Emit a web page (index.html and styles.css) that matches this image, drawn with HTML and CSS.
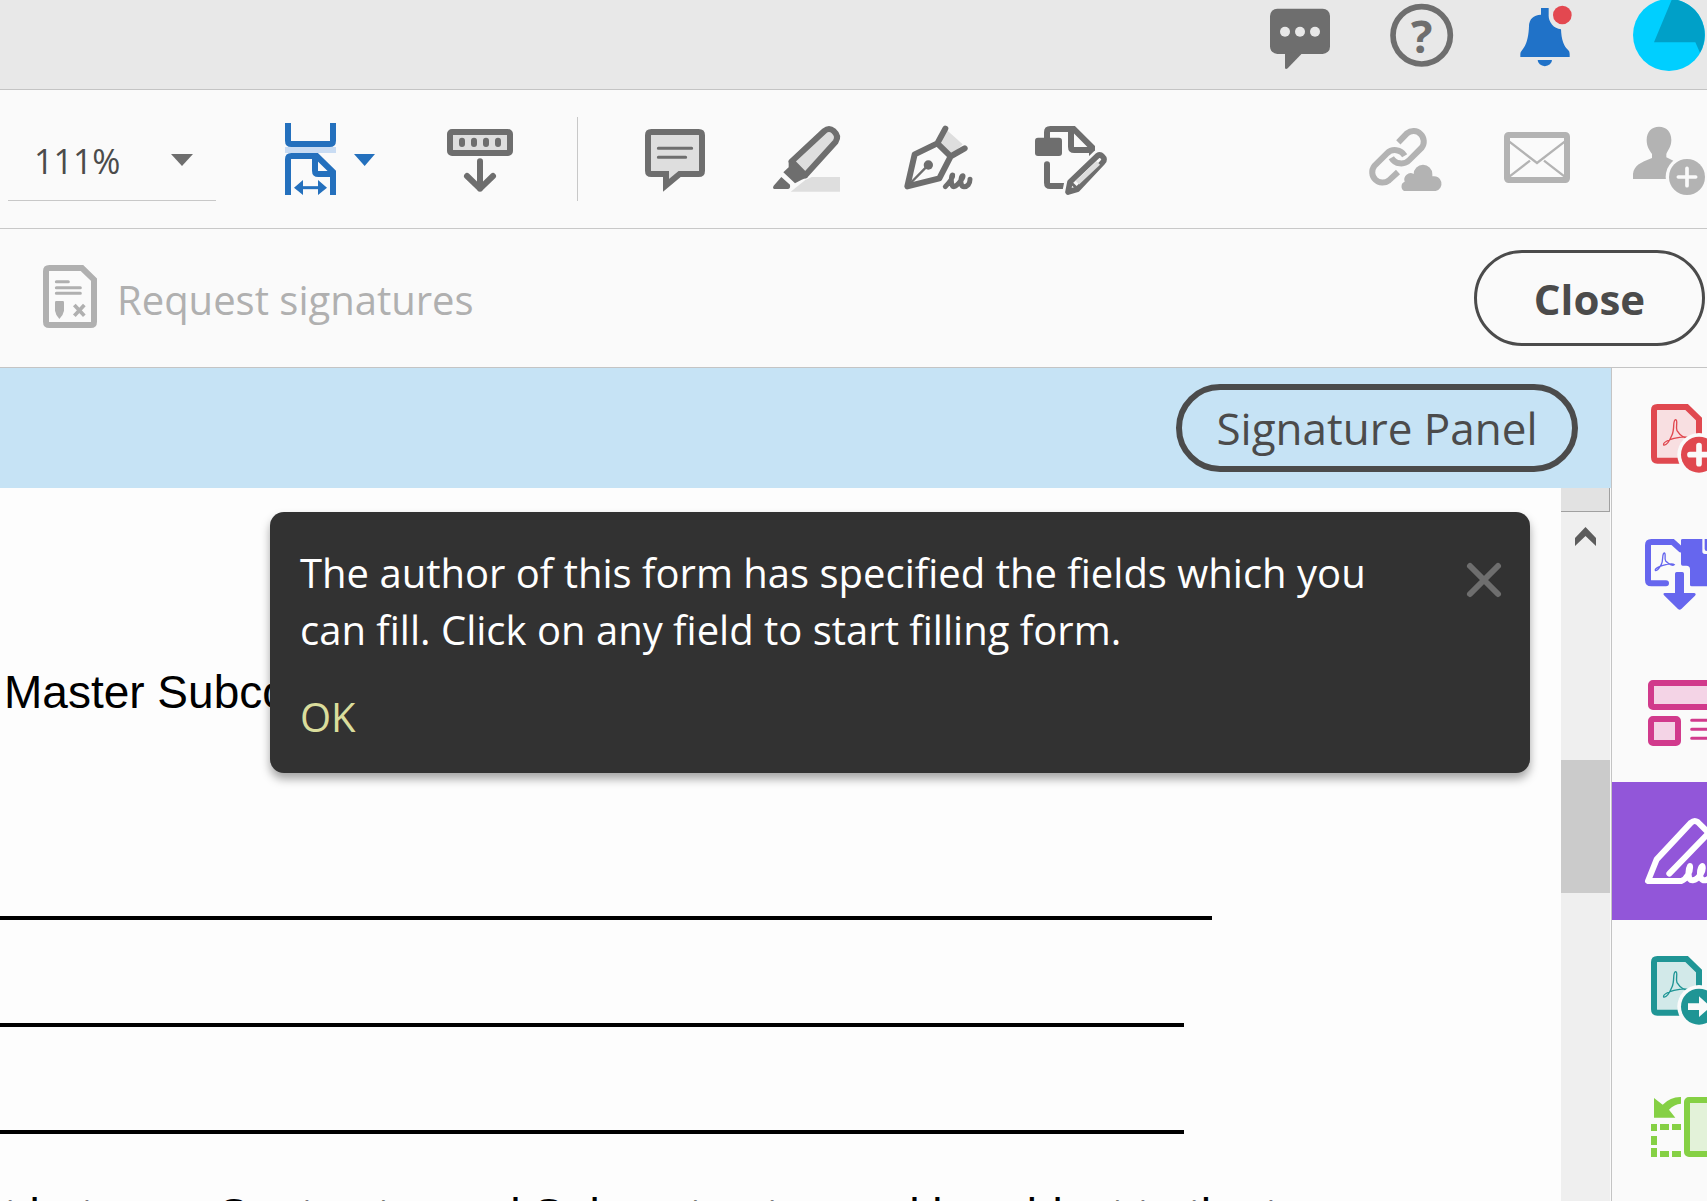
FILE: index.html
```html
<!DOCTYPE html>
<html lang="en">
<head>
<meta charset="utf-8">
<title>Fill &amp; Sign</title>
<link rel="stylesheet" href="styles.css">
</head>
<body>
<header class="app-header">
  <button class="icon-button gray" aria-label="Messages">
    <svg width="60" height="72" viewBox="87 0 180 216"><rect x="90" y="26" width="180" height="136" rx="22" fill="currentColor"/><path d="M135 155V204Q137 210 143 205L188 158Z" fill="currentColor"/><g fill="#e8e8e8"><circle cx="135" cy="95" r="15"/><circle cx="180" cy="95" r="15"/><circle cx="225" cy="95" r="15"/></g></svg>
  </button>
  <button class="icon-button gray" aria-label="Help">
    <svg width="64" height="72" viewBox="447 0 192 216"><circle cx="545" cy="106" r="86" fill="none" stroke="currentColor" stroke-width="17"/><text class="help-mark" x="545" y="158" text-anchor="middle" fill="currentColor">?</text></svg>
  </button>
  <button class="icon-button" aria-label="Notifications">
    <svg width="60" height="72" viewBox="819 0 180 216"><g fill="#2072c8"><path d="M903 24H926V44A42 42 0 0 0 963 88C964 118 971 139 985 151Q989 155 989 162V171H841V162Q841 156 845 152C860 136 866 110 867 78Q868 46 903 44Z"/><path d="M893 180H936A21 18 0 0 1 893 180Z"/></g><circle cx="967" cy="45" r="28" fill="#e34850"/></svg>
  </button>
  <button class="icon-button" aria-label="Account">
    <svg width="72" height="72" viewBox="1179 0 216 216"><circle cx="1287" cy="105" r="108" fill="#00cfff"/><path d="M1296 -3L1242 127H1366L1380 158A108 108 0 0 0 1296 -3Z" fill="#00a0c8"/></svg>
  </button>
</header>

<div class="toolbar">
  <select class="zoom-select" aria-label="Zoom level"><option>111%</option></select>
  <button class="icon-button blue" aria-label="Fit width">
    <svg width="108" height="78" viewBox="828 90 324 234"><g fill="none" stroke="currentColor" stroke-width="18"><path d="M864 99V152Q864 162 874 162H989Q999 162 999 152V99"/><path d="M864 315V208Q864 198 874 198H950L999 246V315"/><path d="M945 198V242Q945 252 955 252H999"/><path d="M905 293H960" stroke-width="9"/></g><rect x="855" y="171" width="153" height="18" fill="#c9dcf3"/><path d="M882 293L909 270V315ZM981 293L954 270V315ZM1062 192H1125L1094 228Z" fill="currentColor"/></svg>
  </button>
  <button class="icon-button gray" aria-label="Show keyboard toolbar">
    <svg width="72" height="78" viewBox="132 90 216 234"><g fill="none" stroke="currentColor" stroke-width="18" stroke-linecap="round" stroke-linejoin="round"><rect x="150" y="126" width="180" height="63" rx="6" fill="#dedede"/><path d="M186 152V162M222 152V162M258 152V162M294 152V162M240 214V296M201 258L240 296L279 258"/></g></svg>
  </button>
  <span class="divider"></span>
  <button class="icon-button gray" aria-label="Comment">
    <svg width="72" height="78" viewBox="717 90 216 234"><g fill="none" stroke="currentColor" stroke-width="18"><path d="M744 136Q744 126 754 126H896Q906 126 906 136V242Q906 252 896 252H839L798 286V252H754Q744 252 744 242Z" fill="#dedede"/><path d="M775 175H875M775 202H857" stroke-width="9" stroke-linecap="round"/></g></svg>
  </button>
  <button class="icon-button gray" aria-label="Highlight">
    <svg width="72" height="78" viewBox="93 90 216 234"><path d="M152 305L196 270L215 261H300V305Z" fill="#dedede"/><path d="M155 214L253 123Q267 111 281 123Q298 138 287 155L196 256Z" fill="#dedede" stroke="currentColor" stroke-width="18" stroke-linejoin="round"/><path d="M146 212L162 220L193 250L203 262L185 269L165 280L130 247L146 232ZM124 261L150 284Q152 297 143 297H107Q95 297 101 287Z" fill="currentColor"/></svg>
  </button>
  <button class="icon-button gray" aria-label="Sign">
    <svg width="72" height="78" viewBox="489 90 216 234"><path d="M592 160L616 116L668 163L632 199Z" fill="#dedede"/><g fill="none" stroke="currentColor" stroke-width="18" stroke-linecap="round" stroke-linejoin="round"><path d="M502 289L524 193L592 160L632 199L598 265ZM592 160L616 116M632 199L674 175"/><path d="M560 230L506 285" stroke-width="7"/><path d="M616 290C630 275 640 262 638 255C634 252 630 290 642 290C652 288 672 262 669 257C662 256 658 290 672 290C682 290 690 282 690 268" stroke-width="15"/></g><circle cx="565" cy="225" r="14" fill="currentColor"/></svg>
  </button>
  <button class="icon-button gray" aria-label="Edit document">
    <svg width="72" height="78" viewBox="885 90 216 234"><rect x="885" y="143" width="81" height="55" rx="9" fill="currentColor"/><g fill="none" stroke="currentColor" stroke-width="18"><path d="M921 150V127Q921 117 931 117H1001L1056 172V200M993 117V170Q993 180 1003 180H1056"/><path d="M921 223V278Q921 288 931 288H976" stroke-linecap="round"/></g><path d="M984 306L990 276L1073 197Q1080 192 1087 199Q1097 208 1088 217L1012 298Z" fill="#fafafa" stroke="#fafafa" stroke-width="34"/><path d="M984 306L990 276L1073 197Q1080 192 1087 199Q1097 208 1088 217L1012 298Z" fill="#fafafa" stroke="currentColor" stroke-width="17" stroke-linejoin="round"/><path d="M1012 278L1075 219" stroke="#dedede" stroke-width="15"/><path d="M994 279L1014 298" stroke="currentColor" stroke-width="9"/></svg>
  </button>
  <div class="share-tools">
    <button class="icon-button light" aria-label="Share link">
      <svg width="72" height="78" viewBox="390 360 216 234"><g fill="none" stroke="currentColor" stroke-width="18"><path d="M478 427L504 400A31 31 0 0 1 548 443L511 480A34 34 0 0 1 457 473"/><path d="M497 467A34 34 0 0 0 444 460L406 498A31 31 0 0 0 450 541L477 516"/></g><path d="M495 573A13 15 0 0 1 497 545A19 19 0 0 1 524 522A28 28 0 0 1 580 522V529A21 21 0 0 1 590 573Z" fill="currentColor"/></svg>
    </button>
    <button class="icon-button light" aria-label="Email">
      <svg width="72" height="78" viewBox="783 360 216 234"><g fill="none" stroke="currentColor"><rect x="801" y="405" width="180" height="135" rx="5" stroke-width="18"/><path d="M808 425L891 489L974 425M808 530L870 482M974 530L912 482" stroke-width="7"/></g></svg>
    </button>
    <button class="icon-button light" aria-label="Add people">
      <svg width="72" height="78" viewBox="1179 360 216 234"><path d="M1220 420C1220 395 1235 380 1257 380S1294 395 1294 420C1294 440 1284 450 1279 462V472L1300 482L1290 537H1179V522C1182 497 1200 488 1236 474V462C1228 450 1220 440 1220 420Z" fill="currentColor"/><circle cx="1341" cy="531" r="64" fill="#fafafa"/><circle cx="1341" cy="531" r="54" fill="currentColor"/><path d="M1315 531H1367M1341 505V557" stroke="#fafafa" stroke-width="11" stroke-linecap="round"/></svg>
    </button>
  </div>
</div>

<div class="sign-bar">
  <button class="request" disabled>
    <svg width="54" height="66" viewBox="129 525 162 198"><g fill="none" stroke="currentColor"><path d="M138 544Q138 534 148 534H246L282 569V695Q282 705 272 705H148Q138 705 138 695Z" stroke-width="18"/><path d="M169 575H205M169 593H241M169 610H241" stroke-width="9" stroke-linecap="round"/><path d="M223 645L253 677M253 645L223 677" stroke-width="11"/></g><path d="M165 637Q165 633 169 633H188Q192 633 192 637V662Q190 675 178 687Q167 675 165 662Z" fill="currentColor"/></svg>
    <span class="request-label">Request signatures</span>
  </button>
  <button class="close-button">Close</button>
</div>

<div class="workspace">
  <main class="viewer">
    <div class="signature-bar">
      <button class="panel-button">Signature Panel</button>
    </div>
    <div class="viewport">
      <article class="document">
        <p class="text-line first">Master Subcontract Agreement</p>
        <hr class="rule wide">
        <hr class="rule">
        <hr class="rule">
        <p class="text-line">t between Contractor and Subcontractor, and is subject to the t</p>
        <section class="notice" role="dialog" aria-label="Form filling">
          <div class="notice-body">
            <p class="notice-text">The author of this form has specified the fields which you can fill. Click on any field to start filling form.</p>
            <button class="ok-button">OK</button>
          </div>
          <button class="dismiss" aria-label="Dismiss">
            <svg width="34" height="34" viewBox="0 0 34 34"><path d="M3 3L31 31M31 3L3 31" stroke="currentColor" stroke-width="6" stroke-linecap="round"/></svg>
          </button>
        </section>
      </article>
      <div class="scrollbar">
        <div class="splitter"></div>
        <button class="scroll-up" aria-label="Scroll up"><svg width="21" height="19" viewBox="0 0 21 19"><path d="M0 11L10.500 0L21 11V19L10.500 9L0 19Z" fill="#5c5c5c"/></svg></button>
        <div class="thumb"></div>
      </div>
    </div>
  </main>

  <nav class="tools" aria-label="Tools">
    <button class="tool red" aria-label="Create PDF">
      <svg width="95" height="138" viewBox="216 -36 285 414"><path d="M342 91Q342 81 352 81H440L477 117V232Q477 242 467 242H352Q342 242 342 232Z" fill="#f8dfe1" stroke="currentColor" stroke-width="18"/><path d="M407 119C397 121 405 146 396 165C388 184 378 197 371 195C368 188 386 179 402 175C418 171 438 169 444 173C438 178 421 168 411 152C406 140 415 121 407 119Z" fill="none" stroke="currentColor" stroke-width="4"/><circle cx="477" cy="224" r="65" fill="#fafafa"/><circle cx="477" cy="224" r="54" fill="currentColor"/><path d="M450 224H504M477 197V251" stroke="#fafafa" stroke-width="17" stroke-linecap="round"/></svg>
    </button>
    <button class="tool indigo" aria-label="Export PDF">
      <svg width="95" height="138" viewBox="216 378 285 414"><path d="M378 610H334Q324 610 324 600V496Q324 486 334 486H398L422 508" fill="none" stroke="currentColor" stroke-width="18" stroke-linecap="round"/><path d="M373 519C365 521 371 540 364 553C358 564 350 573 346 571C344 566 357 559 369 556C381 553 398 550 403 554C399 559 386 552 377 543C372 535 379 521 373 519Z" fill="none" stroke="currentColor" stroke-width="4"/><path d="M423 481Q423 477 428 477H487V514Q487 522 495 522H510V619H455Q450 619 450 614V568Q450 557 439 557H428Q423 557 423 552Z" fill="currentColor"/><path d="M494 477H510V513H500Q494 513 494 506Z" fill="currentColor"/><path d="M405 581Q405 576 410 576H427Q432 576 432 581V639H463Q470 641 465 647L424 687Q419 692 414 687L372 646Q368 640 374 639H405Z" fill="currentColor"/></svg>
    </button>
    <button class="tool pink" aria-label="Organize pages">
      <svg width="95" height="138" viewBox="216 792 285 414"><g fill="#f4d4e6" stroke="currentColor" stroke-width="18"><rect x="333" y="909" width="200" height="72" rx="6"/><rect x="333" y="1017" width="81" height="72" rx="6"/><path d="M455 1021H520M455 1048H520M455 1075H520" stroke-width="9" stroke-linecap="round"/></g></svg>
    </button>
    <button class="tool selected" aria-label="Fill and sign" aria-current="true">
      <svg width="95" height="138" viewBox="216 66 285 414"><g fill="none" stroke="currentColor" stroke-width="18" stroke-linecap="round" stroke-linejoin="round"><path d="M510 223L473 186Q463 179 453 188L350 298L324 363H424C440 357 452 335 450 318C444 328 442 362 458 361C478 358 492 330 487 318C478 325 475 362 494 361C505 360 512 350 515 340" /><path d="M388 341L500 225"/></g></svg>
    </button>
    <button class="tool teal" aria-label="Send PDF">
      <svg width="95" height="138" viewBox="216 -36 285 414"><path d="M342 91Q342 81 352 81H440L477 117V232Q477 242 467 242H352Q342 242 342 232Z" fill="#d2e9e9" stroke="currentColor" stroke-width="18"/><path d="M407 119C397 121 405 146 396 165C388 184 378 197 371 195C368 188 386 179 402 175C418 171 438 169 444 173C438 178 421 168 411 152C406 140 415 121 407 119Z" fill="none" stroke="currentColor" stroke-width="4"/><circle cx="477" cy="224" r="65" fill="#fafafa"/><circle cx="477" cy="224" r="54" fill="currentColor"/><path d="M444 214H477V193L512 224L477 255V234H444Z" fill="#fafafa"/></svg>
    </button>
    <button class="tool green" aria-label="Crop pages">
      <svg width="95" height="138" viewBox="216 894 285 414"><path d="M342 1014L368 1034Q392 1010 423 1011V1031Q403 1032 387 1049L406 1073H342Z" fill="currentColor"/><path d="M333 1092H351V1113H333ZM333 1128H351V1155H333ZM333 1164H351V1191H333ZM360 1092H387V1110H360ZM396 1092H423V1110H396ZM360 1173H387V1191H360ZM396 1173H423V1191H396Z" fill="currentColor"/><rect x="441" y="1020" width="100" height="162" rx="6" fill="#e3f2d9" stroke="currentColor" stroke-width="18"/></svg>
    </button>
  </nav>
</div>
</body>
</html>
```
FILE: styles.css
```css
* {
  box-sizing: border-box;
}

body {
  margin: 0;
  height: 100vh;
  overflow: hidden;
  display: flex;
  flex-direction: column;
  background: #fdfdfd;
  font-family: "Open Sans", "Noto Sans", sans-serif;
  color: #4b4b4b;
}

button {
  margin: 0;
  padding: 0;
  border: 0;
  background: none;
  font: inherit;
  color: inherit;
}

svg {
  display: block;
  overflow: visible;
}

p {
  margin: 0;
}

.gray { color: #6e6e6e; }
.blue { color: #2470bd; }
.light { color: #b3b3b3; }

.icon-button {
  flex: none;
}

.app-header {
  flex: none;
  display: flex;
  justify-content: flex-end;
  align-items: flex-start;
  gap: 60px;
  height: 90px;
  padding-right: 2px;
  background: #e8e8e8;
  border-bottom: 1px solid #c4c4c4;
}

.help-mark {
  font-size: 135px;
  font-weight: 700;
}

.toolbar {
  flex: none;
  display: flex;
  align-items: center;
  gap: 60px;
  height: 139px;
  padding: 0 2px 0 8px;
  background: #fafafa;
  border-bottom: 1px solid #c8c8c8;
}

.zoom-select {
  appearance: none;
  width: 208px;
  height: 84px;
  padding: 4px 0 0 26px;
  border: 0;
  border-bottom: 1px solid #c8c8c8;
  border-radius: 0;
  background: url("data:image/svg+xml,%3Csvg xmlns='http://www.w3.org/2000/svg' width='22' height='12'%3E%3Cpath d='M0 0H22L11 12Z' fill='%236e6e6e'/%3E%3C/svg%3E") no-repeat 163px 37px;
  font: 400 34px/50px "Open Sans", "Noto Sans", sans-serif;
  color: #4b4b4b;
}

.divider {
  flex: none;
  width: 1px;
  height: 84px;
  margin: 0 1px;
  background: #c8c8c8;
}

.share-tools {
  display: flex;
  gap: 60px;
  margin-left: auto;
}

.sign-bar {
  flex: none;
  display: flex;
  justify-content: space-between;
  align-items: center;
  height: 139px;
  padding: 0 2px 0 43px;
  background: #fafafa;
  border-bottom: 1px solid #c4c4c4;
}

.request {
  display: flex;
  align-items: center;
  gap: 20px;
  font-size: 40px;
  line-height: 56px;
  color: #b0b0b0;
}

.request-label {
  padding-top: 4px;
}

.close-button {
  width: 231px;
  height: 96px;
  border: 3px solid #4b4b4b;
  border-radius: 48px;
  font-size: 42px;
  font-weight: 700;
}

.workspace {
  flex: 1;
  display: flex;
  min-height: 0;
}

.viewer {
  flex: 1;
  display: flex;
  flex-direction: column;
  min-width: 0;
}

.signature-bar {
  flex: none;
  display: flex;
  justify-content: flex-end;
  align-items: center;
  height: 120px;
  padding-right: 33px;
  background: #c6e3f5;
}

.panel-button {
  width: 402px;
  height: 88px;
  border: 6px solid #4b4b4b;
  border-radius: 44px;
  font-size: 44px;
  line-height: 60px;
}

.viewport {
  flex: 1;
  display: flex;
  min-height: 0;
}

.document {
  flex: 1;
  position: relative;
  min-width: 0;
  overflow: hidden;
  padding: 178px 0 0 4px;
}

.text-line {
  font: 46px/52px "Liberation Sans", Arial, sans-serif;
  color: #000;
  white-space: nowrap;
}

.text-line.first {
  margin-bottom: 198px;
}

.rule {
  width: 1184px;
  height: 4px;
  margin: 0 0 103px -4px;
  border: 0;
  background: #000;
}

.rule.wide {
  width: 1212px;
}

.rule + .text-line {
  margin-top: -48px;
}

.notice {
  position: absolute;
  top: 24px;
  left: 270px;
  right: 31px;
  display: flex;
  justify-content: space-between;
  align-items: flex-start;
  padding: 32px 29px 28px 30px;
  border-radius: 14px;
  background: #323232;
  box-shadow: 0 6px 10px rgba(0, 0, 0, 0.35);
  color: #fff;
  font-size: 40px;
  line-height: 57px;
}

.notice-text {
  max-width: 1110px;
  margin-bottom: 30px;
}

.ok-button {
  color: #dadd9c;
}

.dismiss {
  margin-top: 19px;
  color: #6e6e6e;
}

.scrollbar {
  flex: none;
  width: 50px;
  border-right: 1px solid #fafafa;
  background: #efefef;
}

.splitter {
  height: 24px;
  background: #e2e2e2;
  border: solid #a0a0a0;
  border-width: 0 1px 1px 0;
}

.scroll-up {
  display: flex;
  justify-content: center;
  width: 100%;
  height: 50px;
  padding-top: 15px;
}

.thumb {
  height: 133px;
  margin-top: 198px;
  background: #cbcbcb;
}

.tools {
  flex: none;
  width: 96px;
  overflow: hidden;
  border-left: 1px solid #c4c4c4;
  background: #fafafa;
}

.tool {
  display: block;
  width: 100%;
  height: 138px;
}

.tool.red { color: #e0484f; }
.tool.indigo { color: #6666ee; }
.tool.pink { color: #d13a8c; }
.tool.teal { color: #1f9595; }
.tool.green { color: #85d044; }

.tool.selected {
  background: #9256d9;
  color: #fff;
}
```
